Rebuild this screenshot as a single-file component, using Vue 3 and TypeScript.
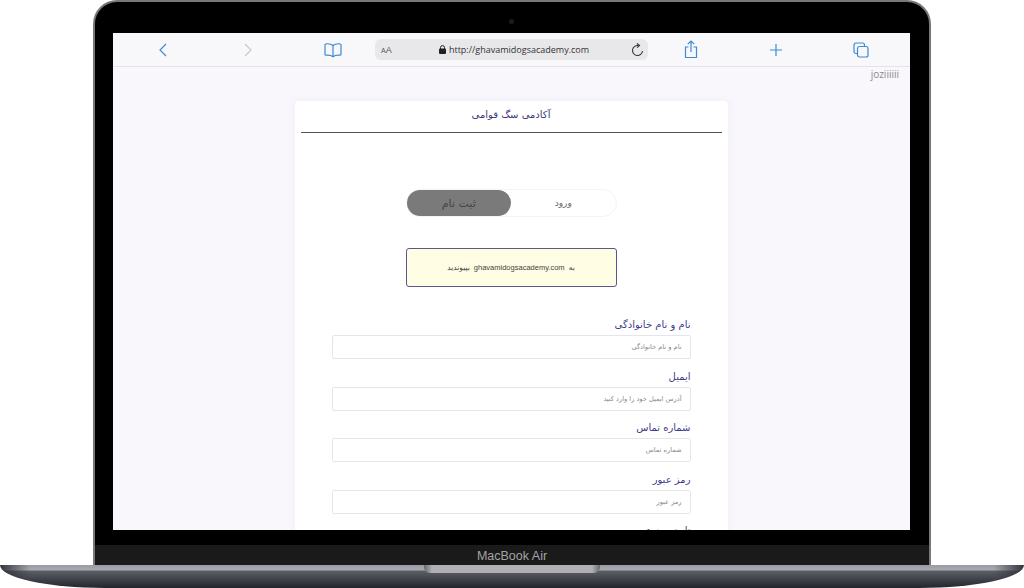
<template>
  <div class="page">
    <div class="lid">
      <span class="camera"></span>
      <div class="screen">
        <div class="toolbar">
          <div class="tool">
            <svg width="12" height="16" viewBox="0 0 12 16"><path d="M9 2 3 8l6 6" class="stroke" /></svg>
          </div>
          <div class="tool">
            <svg width="12" height="16" viewBox="0 0 12 16"><path d="M3 2l6 6-6 6" class="stroke muted" /></svg>
          </div>
          <div class="tool">
            <svg width="18" height="16" viewBox="0 0 18 16">
              <path d="M9 3.500C7.500 2 5 1.600 2 1.800c-.6 0-1 .4-1 1v9.400c0 .5.4.9 1 .9 3-.2 5.500.2 7 1.600 1.500-1.400 4-1.800 7-1.600.6 0 1-.4 1-.9V2.800c0-.6-.4-1-1-1-3-.2-5.500.2-7 1.700zM9 3.500v11" class="stroke" />
            </svg>
          </div>
          <div class="url-bar">
            <span class="aa"><small>A</small>A</span>
            <span class="address">
              <svg width="7" height="9" viewBox="0 0 7 9"><path d="M1.500 4V2.600a2 2 0 0 1 4 0V4" fill="none" stroke="#222" /><rect y="3.600" width="7" height="5.400" rx="1" fill="#222" /></svg>
              http://ghavamidogsacademy.com
            </span>
            <svg class="reload" width="13" height="14" viewBox="0 0 13 14">
              <path d="M7.500 2.600A5 5 0 1 0 11.500 8" fill="none" stroke="#333" stroke-width="1.100" />
              <path d="M6 .5l2.500 2.100L6 4.700" fill="none" stroke="#333" stroke-width="1.100" />
            </svg>
          </div>
          <div class="tool">
            <svg width="14" height="19" viewBox="0 0 14 19"><path d="M4.500 7H1.500v10.500h11V7H9.500M7 12V1.200M3.800 4.200 7 1l3.200 3.200" class="stroke" /></svg>
          </div>
          <div class="tool">
            <svg width="14" height="14" viewBox="0 0 14 14"><path d="M7 1v12M1 7h12" class="stroke" /></svg>
          </div>
          <div class="tool">
            <svg width="16" height="16" viewBox="0 0 16 16">
              <rect x="4.500" y="4.500" width="10.500" height="10.500" rx="2" class="stroke" />
              <path d="M4.500 11.500H3a2 2 0 0 1-2-2V3a2 2 0 0 1 2-2h6.500a2 2 0 0 1 2 2v1.500" class="stroke" />
            </svg>
          </div>
        </div>

        <div class="content">
          <div class="user">joziiiiii</div>
          <div class="card" dir="rtl">
            <h1 class="title">آکادمی سگ قوامی</h1>
            <div class="body">
              <div class="toggle">
                <span class="tab">ورود</span>
                <span class="tab active">ثبت نام</span>
              </div>
              <div class="alert">به ghavamidogsacademy.com بپیوندید</div>
              <div class="form">
                <div class="field" v-for="f in fields" :key="f.label">
                  <label class="label">{{ f.label }}</label>
                  <div class="input">{{ f.hint }}</div>
                </div>
              </div>
            </div>
          </div>
        </div>
      </div>
      <div class="chin">MacBook Air</div>
    </div>
    <div class="base">
      <div class="notch"></div>
    </div>
  </div>
</template>

<script setup lang="ts">
interface Field { label: string; hint: string; }

const fields: Field[] = [
  { label: 'نام و نام خانوادگی', hint: 'نام و نام خانوادگی' },
  { label: 'ایمیل', hint: 'آدرس ایمیل خود را وارد کنید' },
  { label: 'شماره تماس', hint: 'شماره تماس' },
  { label: 'رمز عبور', hint: 'رمز عبور' },
  { label: 'تایید رمز عبور', hint: 'تایید رمز عبور' },
];
</script>

<style>
html, body { margin: 0; background: #fff; overflow: hidden; }
</style>

<style scoped>
.page { width: 1024px; height: 588px; display: flex; flex-direction: column; align-items: center; overflow: hidden; font-family: "DejaVu Sans", "Noto Sans", sans-serif; }
.lid { position: relative; width: 838px; height: 565px; flex: none; box-sizing: border-box; padding-top: 31px; background: #000; border: 2px solid #77777c; border-bottom: 0; border-radius: 24px 24px 0 0; display: flex; flex-direction: column; align-items: center; }
.camera { position: absolute; top: 17px; left: 414px; width: 5px; height: 5px; border-radius: 50%; background: #1b1b1f; }
.screen { width: 797px; height: 497px; flex: none; margin-left: -1px; overflow: hidden; display: flex; flex-direction: column; background: #f9f6fc; }
.toolbar { height: 33px; flex: none; display: flex; align-items: center; padding-left: 7px; background: #f8f8fa; border-bottom: 1px solid #e4e4e8; }
.tool { width: 85px; flex: none; display: flex; justify-content: center; align-items: center; }
.stroke { fill: none; stroke: #3d8bd0; stroke-width: 1.2; }
.muted { stroke: #c9c9cd; }
.url-bar { width: 273px; height: 21px; flex: none; box-sizing: border-box; display: flex; align-items: center; padding: 0 4px 0 6px; background: #e8e8ea; border-radius: 6px; font-family: "Liberation Sans", sans-serif; }
.aa { font-size: 9px; color: #555; width: 30px; }
.aa small { font-size: 7px; }
.address { flex: 1; display: flex; align-items: center; justify-content: center; gap: 3px; font-size: 9px; color: #333; font-family: "Open Sans", sans-serif; margin-right: 14px; }
.reload { flex: none; }
.content { flex: 1; min-height: 0; display: flex; flex-direction: column; align-items: center; }
.user { align-self: flex-end; height: 34px; flex: none; padding: 0 11px 0 0; font: 10px/14px "Open Sans", sans-serif; color: #8a8a8a; box-sizing: border-box; }
.card { width: 433px; flex: none; box-sizing: border-box; margin-right: 1px; padding: 0 6px; background: #fff; border-radius: 4px; box-shadow: 0 0 8px rgba(60, 50, 110, .05); }
.title { margin: 0; height: 31px; font-size: 10px; font-weight: 400; line-height: 27px; color: #3e3a78; text-align: center; border-bottom: 1px solid #55555f; }
.body { display: flex; flex-direction: column; align-items: center; padding-top: 56px; }
.toggle { width: 211px; height: 28px; box-sizing: border-box; display: flex; border: 1px solid #f4f4f6; border-radius: 14px; }
.tab { flex: 1; display: flex; align-items: center; justify-content: center; font-size: 9px; color: #666; border-radius: 14px; }
.active { background: #7a7a7a; color: #444; font-size: 11px; }
.alert { width: 211px; height: 39px; box-sizing: border-box; margin-top: 31px; display: flex; align-items: center; justify-content: center; font-family: "Liberation Sans", "DejaVu Sans", sans-serif; font-size: 7.500px; word-spacing: 2px; color: #444; background: #fffde4; border: 1px solid #5a5694; border-radius: 3px; }
.form { width: 359px; margin-top: 30px; display: flex; flex-direction: column; gap: 9.500px; }
.field { display: flex; flex-direction: column; }
.label { height: 18px; font-size: 10px; line-height: 15px; color: #3e3a8c; }
.input { height: 24px; box-sizing: border-box; padding: 0 8px; display: flex; align-items: center; font-size: 6.600px; color: #888; border: 1px solid #e6e6ea; border-radius: 2px; }
.chin { flex: 1; width: 100%; display: flex; align-items: center; justify-content: center; background: linear-gradient(#000 0 15px, #1a1a1a 15px); padding-top: 16px; box-sizing: border-box; font: 12.500px "Liberation Sans", sans-serif; color: #a4a4a6; }
.base { width: 1024px; height: 23px; flex: none; position: relative; background: linear-gradient(90deg, #33343a 0, rgba(160, 160, 168, 0) 30px, rgba(160, 160, 168, 0) 994px, #33343a 100%), linear-gradient(#9a9aa2 0, #a8a8b0 5px, #5c5e66 6px, #22252c 23px); border-radius: 0 0 105px 105px / 0 0 23px 23px; }
.notch { position: absolute; left: 424px; top: 0; width: 176px; height: 8px; background: linear-gradient(90deg, #66666c, #b0b0b4 8px, #b0b0b4 168px, #66666c); border-radius: 0 0 6px 6px; }
</style>
